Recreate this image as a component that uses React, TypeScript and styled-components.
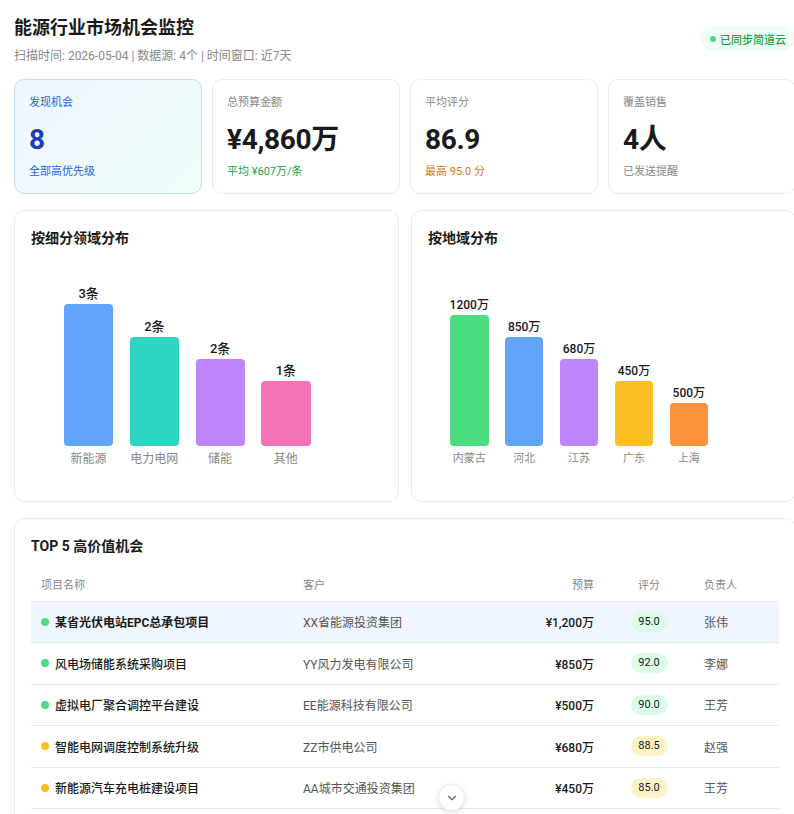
import { createGlobalStyle, styled } from "styled-components";
import { ChevronDown } from "lucide-react";

const GlobalStyle = createGlobalStyle`
  html, body {
    margin: 0;
    padding: 0;
    height: 100%;
    overflow: hidden;
    background: #fff;
  }
  body {
    font-family: Roboto, "Noto Sans CJK SC", sans-serif;
    color: #1a1a1a;
  }
`;

const Page = styled.div`
  position: relative;
  width: 794px;
  height: 814px;
  overflow: hidden;
`;

const Content = styled.div`
  width: 782px;
  padding: 14px 0 0 14px;
  display: flex;
  flex-direction: column;
`;

const Header = styled.header`
  height: 65px;
  display: flex;
  justify-content: space-between;
  align-items: flex-start;
`;

const Title = styled.h1`
  margin: 1px 0 0;
  font-size: 18px;
  line-height: 26px;
  font-weight: 700;
`;

const Subtitle = styled.p`
  margin: 6px 0 0;
  font-size: 12px;
  line-height: 18px;
  color: #888;
`;

const SyncPill = styled.div`
  margin-top: 12px;
  height: 25px;
  padding: 0 10px 0 10px;
  display: flex;
  align-items: center;
  gap: 4px;
  border-radius: 13px;
  background: #f0fdf4;
  color: #16a34a;
  font-size: 11px;
  font-weight: 500;
`;

const Dot = styled.span<{ $color: string }>`
  width: 6px;
  height: 6px;
  flex: none;
  border-radius: 50%;
  background: ${(p) => p.$color};
`;

const StatRow = styled.section`
  display: grid;
  grid-template-columns: repeat(4, 1fr);
  gap: 10px;
`;

const StatCard = styled.div<{ $highlight?: boolean }>`
  box-sizing: border-box;
  height: 115px;
  padding: 15px 14px 14px;
  border-radius: 10px;
  border: 1px solid ${(p) => (p.$highlight ? "#bfdbfe" : "#ebebeb")};
  background: ${(p) => (p.$highlight ? "linear-gradient(135deg, #eff6ff, #f0fdfa)" : "#fff")};
`;

const StatLabel = styled.div<{ $color?: string }>`
  font-size: 11px;
  line-height: 16px;
  color: ${(p) => p.$color || "#888"};
`;

const StatValue = styled.div<{ $color?: string }>`
  margin-top: 10px;
  font-size: 28px;
  line-height: 38px;
  font-weight: 700;
  letter-spacing: -0.3px;
  color: ${(p) => p.$color || "#1a1a1a"};
`;

const StatNote = styled.div<{ $color?: string }>`
  margin-top: 5px;
  font-size: 11px;
  line-height: 16px;
  color: ${(p) => p.$color || "#888"};
`;

const ChartRow = styled.section`
  margin-top: 16px;
  display: grid;
  grid-template-columns: 1fr 1fr;
  gap: 12px;
`;

const Panel = styled.div`
  box-sizing: border-box;
  padding: 16px;
  border-radius: 10px;
  border: 1px solid #ebebeb;
  background: #fff;
`;

const ChartPanel = styled(Panel)`
  height: 292px;
`;

const PanelTitle = styled.h2`
  margin: 1px 0 0;
  font-size: 14px;
  line-height: 20px;
  font-weight: 700;
`;

const Bars = styled.div<{ $left: number; $gap: number }>`
  height: 182px;
  margin-top: 16px;
  padding-left: ${(p) => p.$left}px;
  display: flex;
  align-items: flex-end;
  gap: ${(p) => p.$gap}px;
`;

const BarColumn = styled.div<{ $width: number }>`
  width: ${(p) => p.$width}px;
  display: flex;
  flex-direction: column;
  align-items: center;
`;

const BarValue = styled.div<{ $size: number }>`
  margin-bottom: 2px;
  font-size: ${(p) => p.$size}px;
  line-height: 16px;
  font-weight: 500;
  white-space: nowrap;
`;

const Bar = styled.div<{ $height: number; $color: string }>`
  width: 100%;
  height: ${(p) => p.$height}px;
  border-radius: 4px;
  background: ${(p) => p.$color};
`;

const BarLabel = styled.div<{ $size: number }>`
  height: 24px;
  margin-bottom: -24px;
  padding-top: 5px;
  box-sizing: border-box;
  font-size: ${(p) => p.$size}px;
  line-height: 16px;
  color: #888;
  white-space: nowrap;
`;

const TablePanel = styled(Panel)`
  margin-top: 16px;
  height: 340px;
`;

const Table = styled.table`
  width: 100%;
  margin-top: 11px;
  border-collapse: collapse;
  table-layout: fixed;
`;

const Th = styled.th<{ $align?: string; $width?: number }>`
  box-sizing: border-box;
  height: 34px;
  padding: 0 10px;
  width: ${(p) => (p.$width ? `${p.$width}px` : "auto")};
  text-align: ${(p) => p.$align || "left"};
  font-size: 11px;
  font-weight: 400;
  color: #888;
  border-bottom: 1px solid #e2e8f0;
`;

const Tr = styled.tr<{ $active?: boolean }>`
  background: ${(p) => (p.$active ? "#eff6ff" : "#fff")};
`;

const Td = styled.td<{ $align?: string; $color?: string; $weight?: number; $blue?: boolean }>`
  height: 40.5px;
  padding: 0 10px;
  text-align: ${(p) => p.$align || "left"};
  font-size: 12px;
  font-weight: ${(p) => p.$weight || 400};
  color: ${(p) => p.$color || "#1a1a1a"};
  border-bottom: 1px solid ${(p) => (p.$blue ? "#e2e8f0" : "#e8e8e8")};
  white-space: nowrap;
`;

const NameCell = styled.div<{ $bold?: boolean }>`
  display: flex;
  align-items: center;
  gap: 6px;
  font-weight: ${(p) => (p.$bold ? 700 : 500)};
`;

const RowDot = styled(Dot)`
  width: 8px;
  height: 8px;
`;

const Score = styled.span<{ $warm?: boolean }>`
  display: inline-block;
  width: 37px;
  height: 20px;
  border-radius: 10px;
  background: ${(p) => (p.$warm ? "#fef3c7" : "#dcfce7")};
  font-size: 11px;
  line-height: 20px;
  text-align: center;
  vertical-align: middle;
`;

const ScrollButton = styled.button`
  position: absolute;
  left: 438px;
  top: 784px;
  width: 27px;
  height: 27px;
  padding: 0;
  display: flex;
  align-items: center;
  justify-content: center;
  border-radius: 50%;
  border: 1px solid #ececec;
  background: #fff;
  color: #666;
  box-shadow: 0 2px 6px rgba(0, 0, 0, 0.12);
`;

const STATS = [
  { label: "发现机会", value: "8", note: "全部高优先级", highlight: true, labelColor: "#2563eb", valueColor: "#1e40af", noteColor: "#2563eb" },
  { label: "总预算金额", value: "¥4,860万", note: "平均 ¥607万/条", noteColor: "#16a34a" },
  { label: "平均评分", value: "86.9", note: "最高 95.0 分", noteColor: "#d97706" },
  { label: "覆盖销售", value: "4人", note: "已发送提醒" },
];

const DOMAIN_BARS = [
  { value: "3条", label: "新能源", height: 142, color: "#60a5fa" },
  { value: "2条", label: "电力电网", height: 109, color: "#2dd4bf" },
  { value: "2条", label: "储能", height: 87, color: "#c084fc" },
  { value: "1条", label: "其他", height: 65, color: "#f472b6" },
];

const REGION_BARS = [
  { value: "1200万", label: "内蒙古", height: 131, color: "#4ade80" },
  { value: "850万", label: "河北", height: 109, color: "#60a5fa" },
  { value: "680万", label: "江苏", height: 87, color: "#c084fc" },
  { value: "450万", label: "广东", height: 65, color: "#fbbf24" },
  { value: "500万", label: "上海", height: 43, color: "#fb923c" },
];

const ROWS = [
  { name: "某省光伏电站EPC总承包项目", client: "XX省能源投资集团", budget: "¥1,200万", score: "95.0", owner: "张伟" },
  { name: "风电场储能系统采购项目", client: "YY风力发电有限公司", budget: "¥850万", score: "92.0", owner: "李娜" },
  { name: "虚拟电厂聚合调控平台建设", client: "EE能源科技有限公司", budget: "¥500万", score: "90.0", owner: "王芳" },
  { name: "智能电网调度控制系统升级", client: "ZZ市供电公司", budget: "¥680万", score: "88.5", owner: "赵强", warm: true },
  { name: "新能源汽车充电桩建设项目", client: "AA城市交通投资集团", budget: "¥450万", score: "85.0", owner: "王芳", warm: true },
];

export default function App() {
  return (
    <Page>
      <GlobalStyle />
      <Content>
        <Header>
          <div>
            <Title>能源行业市场机会监控</Title>
            <Subtitle>扫描时间: 2026-05-04 | 数据源: 4个 | 时间窗口: 近7天</Subtitle>
          </div>
          <SyncPill>
            <Dot $color="#4ade80" />
            已同步简道云
          </SyncPill>
        </Header>

        <StatRow>
          {STATS.map((s) => (
            <StatCard key={s.label} $highlight={s.highlight}>
              <StatLabel $color={s.labelColor}>{s.label}</StatLabel>
              <StatValue $color={s.valueColor}>{s.value}</StatValue>
              <StatNote $color={s.noteColor}>{s.note}</StatNote>
            </StatCard>
          ))}
        </StatRow>

        <ChartRow>
          <ChartPanel>
            <PanelTitle>按细分领域分布</PanelTitle>
            <Bars $left={33} $gap={16.5}>
              {DOMAIN_BARS.map((b) => (
                <BarColumn key={b.label} $width={49.25}>
                  <BarValue $size={13}>{b.value}</BarValue>
                  <Bar $height={b.height} $color={b.color} />
                  <BarLabel $size={12}>{b.label}</BarLabel>
                </BarColumn>
              ))}
            </Bars>
          </ChartPanel>
          <ChartPanel>
            <PanelTitle>按地域分布</PanelTitle>
            <Bars $left={22} $gap={16.4}>
              {REGION_BARS.map((b) => (
                <BarColumn key={b.label} $width={38.5}>
                  <BarValue $size={12}>{b.value}</BarValue>
                  <Bar $height={b.height} $color={b.color} />
                  <BarLabel $size={11}>{b.label}</BarLabel>
                </BarColumn>
              ))}
            </Bars>
          </ChartPanel>
        </ChartRow>

        <TablePanel>
          <PanelTitle>TOP 5 高价值机会</PanelTitle>
          <Table>
            <thead>
              <tr>
                <Th $width={262}>项目名称</Th>
                <Th>客户</Th>
                <Th $align="right" $width={80}>预算</Th>
                <Th $align="center" $width={90}>评分</Th>
                <Th $width={85}>负责人</Th>
              </tr>
            </thead>
            <tbody>
              {ROWS.map((r, i) => (
                <Tr key={r.name} $active={i === 0}>
                  <Td $blue={i === 0}>
                    <NameCell $bold={i === 0}>
                      <RowDot $color={r.warm ? "#fbbf24" : "#4ade80"} />
                      {r.name}
                    </NameCell>
                  </Td>
                  <Td $color="#555" $blue={i === 0}>{r.client}</Td>
                  <Td $align="right" $weight={500} $blue={i === 0}>{r.budget}</Td>
                  <Td $align="center" $blue={i === 0}>
                    <Score $warm={r.warm}>{r.score}</Score>
                  </Td>
                  <Td $color="#555" $blue={i === 0}>{r.owner}</Td>
                </Tr>
              ))}
            </tbody>
          </Table>
        </TablePanel>
      </Content>
      <ScrollButton aria-label="向下滚动">
        <ChevronDown size={14} strokeWidth={2} />
      </ScrollButton>
    </Page>
  );
}
